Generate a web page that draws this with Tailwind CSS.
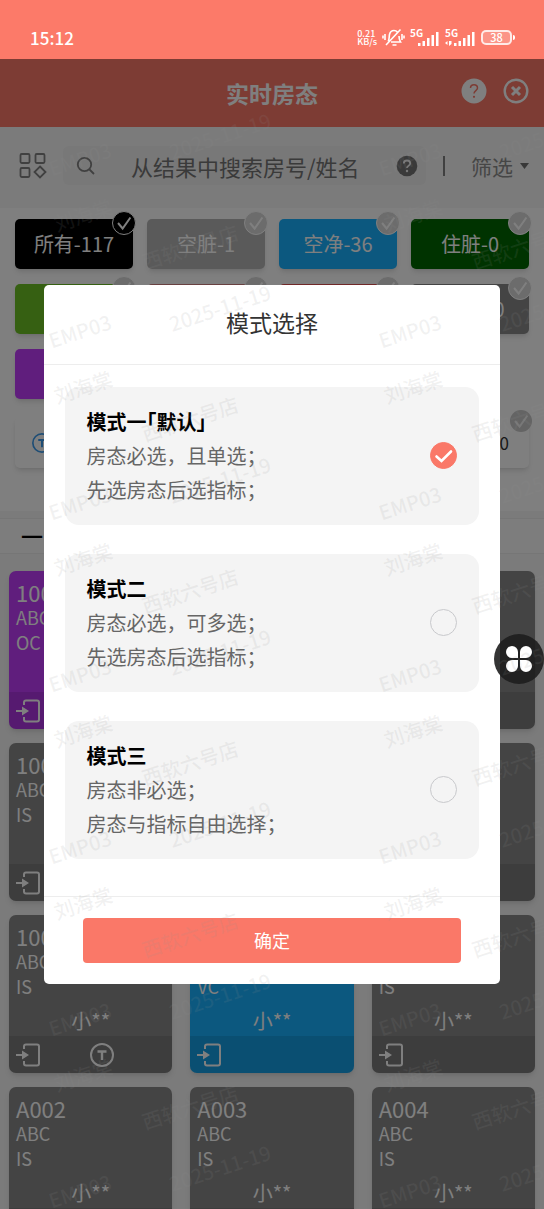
<!DOCTYPE html>
<html lang="zh-CN">
<head>
<meta charset="utf-8">
<meta name="viewport" content="width=device-width, initial-scale=1">
<title>实时房态</title>
<script src="https://cdn.jsdelivr.net/npm/@tailwindcss/browser@4"></script>
</head>
<body class="relative flex h-screen flex-col overflow-hidden bg-[#f6f6f6] font-['Noto_Sans_CJK_SC',sans-serif]">

<svg class="hidden" aria-hidden="true">
  <symbol id="tick" viewBox="0 0 24 24"><path d="M5.500 12l5 6 8.500-12" fill="none" stroke="currentColor" stroke-width="2.200"/></symbol>
  <symbol id="enter" viewBox="0 0 24 24"><path d="M8 6V3.500Q8 1.500 10 1.500H21Q23 1.500 23 3.500V20.500Q23 22.500 21 22.500H10Q8 22.500 8 20.500V18" fill="none" stroke="currentColor" stroke-width="2"/><path d="M0 12h7" stroke="currentColor" stroke-width="2.200"/><path d="M6 7.500L13 12 6 16.500z" fill="currentColor"/></symbol>
  <symbol id="tmark" viewBox="0 0 24 24"><circle cx="12" cy="12" r="11" fill="none" stroke="currentColor" stroke-width="2"/><path d="M7.500 8.500h9M12 8.500v8.500" fill="none" stroke="currentColor" stroke-width="2.400"/></symbol>
</svg>

<!-- Status bar -->
<div class="flex h-[59px] shrink-0 items-end justify-between bg-[#fc7a69] pr-[29px] pl-[30px] text-white">
  <span class="mb-[8px] text-[17px] leading-[26px] font-medium">15:12</span>
  <div class="mb-[12px] flex items-center gap-[5px]">
    <span class="text-[9px] leading-[8px] font-medium">0.21<br>KB/s</span>
    <svg class="h-[19px] w-[23px]" viewBox="0 0 23 19" fill="none" stroke="currentColor" stroke-width="1.600"><path d="M6 13.500C7.500 12 7 9 7.500 6.500 8.200 3.500 10 2.500 12 2.500c1.500 0 2.500.5 3.300 1.500M17 8c0 2 .3 4 1.500 6H9M10.500 17h4M4 17L18.500 1.500M3 6v6M1 7.500v3M20 6v6M22 7.500v3"/></svg>
    <svg class="h-[18px] w-[30px] overflow-visible" viewBox="0 0 30 18" fill="currentColor"><text x="0" y="8" font-size="10" font-weight="700">5G</text><path d="M8 14h2.500v3H8zM12.500 12H15v5h-2.500zM17 9h2.500v8H17zM21.500 6H24v11h-2.500zM26 3h2.500v14H26z"/></svg>
    <svg class="h-[18px] w-[31px] overflow-visible" viewBox="0 0 31 18" fill="currentColor"><text x="0" y="8" font-size="10" font-weight="700">5G</text><path d="M0 14l2.500-2v4zM4 12h2.500v3L4 17zM9 14h2.500v3H9zM13.500 12H16v5h-2.500zM18 9h2.500v8H18zM22.500 6H25v11h-2.500zM27 3h2.500v14H27z"/></svg>
    <div class="flex items-center gap-px">
      <span class="flex h-[15px] w-[31px] items-center justify-center rounded-[5px] border-2 border-white/80 bg-white/20 text-[11px] leading-none font-medium">38</span>
      <span class="h-[5px] w-[2px] rounded-r bg-white"></span>
    </div>
  </div>
</div>

<!-- Page -->
<header class="grid h-[68px] shrink-0 grid-cols-[1fr_auto_1fr] items-center bg-[#fa7868] px-[15px] text-white">
  <span></span>
  <h1 class="text-[23px] font-bold">实时房态</h1>
  <div class="mb-[5px] flex items-center justify-end gap-[16px]">
    <button aria-label="帮助"><svg class="size-[26px]" viewBox="0 0 26 26"><circle cx="13" cy="13" r="12.500" fill="#fff"/><path d="M9.500 10c0-4.500 7-4.500 7 0 0 2.500-3.500 2.700-3.500 5.500" fill="none" stroke="#fa7868" stroke-width="1.500"/><circle cx="13" cy="18.800" r="1.100" fill="#fa7868"/></svg></button>
    <button aria-label="关闭"><svg class="size-[26px]" viewBox="0 0 26 26" fill="none" stroke="#fff"><circle cx="13" cy="13" r="11.300" stroke-width="2.400"/><path d="M9 9l8 8M17 9l-8 8" stroke-width="3"/></svg></button>
  </div>
</header>

<div class="flex h-[81px] shrink-0 items-center pr-[15px] pb-[4px] pl-[19px] text-[#808080]">
  <button aria-label="视图" class="shrink-0"><svg class="size-[28px]" viewBox="0 0 28 28" fill="none" stroke="currentColor" stroke-width="1.800"><rect x="1.500" y="2" width="9" height="9" rx="1.200"/><rect x="16.500" y="2" width="9" height="9" rx="1.200"/><rect x="1.500" y="16" width="9" height="9" rx="1.200"/><path d="M21 14.500l5.500 5.500-5.500 5.500-5.500-5.500z"/></svg></button>
  <label class="ml-[16px] flex h-[39px] min-w-0 flex-1 items-center rounded-md bg-[#f0f0f0] pr-[8px] pl-[13px]">
    <svg class="size-[20px] shrink-0" viewBox="0 0 20 20" fill="none" stroke="currentColor" stroke-width="1.800"><circle cx="8.500" cy="8.500" r="6.700"/><path d="M13.500 13.500l4.500 4.500"/></svg>
    <input type="text" aria-label="搜索" placeholder="从结果中搜索房号/姓名" class="ml-[35px] min-w-0 flex-1 text-[22px] leading-[32px] placeholder:text-[#757575]">
    <svg class="size-[22px] shrink-0" viewBox="0 0 22 22"><circle cx="11" cy="11" r="10.300" fill="#757575"/><path d="M7.800 8.500c0-4 6.400-4 6.400 0 0 2.300-3.200 2.300-3.200 4.500" fill="none" stroke="#f0f0f0" stroke-width="1.800"/><circle cx="11" cy="16" r="1.200" fill="#f0f0f0"/></svg>
  </label>
  <span class="ml-[17px] h-[20px] w-[2px] bg-[#808080]"></span>
  <button class="ml-[26px] flex items-center gap-[7px] text-[21px] leading-[32px] text-[#8c8c8c]">筛选<svg class="h-[6px] w-[9px]" viewBox="0 0 9 6"><path d="M0 0h9L4.500 6z" fill="#707070"/></svg></button>
</div>

<section class="flex h-[303px] shrink-0 flex-col bg-white px-[15px] pt-[11px]">
  <div class="grid grid-cols-4 gap-x-[14px] gap-y-[15px] text-[20px] text-white">
    <button class="relative h-[50px] rounded-[5px] bg-black shadow-md">所有-117<svg class="absolute -top-[8px] -right-[3px] size-[24px] rounded-full border border-white bg-black text-white"><use href="#tick"/></svg></button>
    <button class="relative h-[50px] rounded-[5px] bg-[#b4b4b4] shadow-md">空脏-1<svg class="absolute -top-[8px] -right-[3px] size-[24px] rounded-full border border-white bg-[#d8d8d8] text-white"><use href="#tick"/></svg></button>
    <button class="relative h-[50px] rounded-[5px] bg-[#18b0ff] shadow-md">空净-36<svg class="absolute -top-[8px] -right-[3px] size-[24px] rounded-full border border-white bg-[#d8d8d8] text-white"><use href="#tick"/></svg></button>
    <button class="relative h-[50px] rounded-[5px] bg-[#006600] shadow-md">住脏-0<svg class="absolute -top-[8px] -right-[3px] size-[24px] rounded-full border border-white bg-[#d8d8d8] text-white"><use href="#tick"/></svg></button>
    <button class="relative h-[50px] rounded-[5px] bg-[#6cc024] shadow-md">住净-0<svg class="absolute -top-[8px] -right-[3px] size-[24px] rounded-full border border-white bg-[#d8d8d8] text-white"><use href="#tick"/></svg></button>
    <button class="relative h-[50px] rounded-[5px] bg-[#d08080] shadow-md" aria-label="房态"><svg class="absolute -top-[8px] -right-[3px] size-[24px] rounded-full border border-white bg-[#d8d8d8] text-white"><use href="#tick"/></svg></button>
    <button class="relative h-[50px] rounded-[5px] bg-[#e05050] shadow-md" aria-label="房态"><svg class="absolute -top-[8px] -right-[3px] size-[24px] rounded-full border border-white bg-[#d8d8d8] text-white"><use href="#tick"/></svg></button>
    <button class="relative h-[50px] rounded-[5px] bg-[#888888] shadow-md">维修-10<svg class="absolute -top-[8px] -right-[3px] size-[24px] rounded-full border border-white bg-[#d8d8d8] text-white"><use href="#tick"/></svg></button>
    <button class="h-[50px] rounded-[5px] bg-[#c03cfa] shadow-md">锁房-0</button>
  </div>
  <div class="mt-[18px] grid grid-cols-4 gap-x-[14px] text-[17px] text-[#333]">
    <button class="flex h-[51px] items-center rounded-[5px] bg-white pl-[17px] shadow-md" aria-label="指标"><svg class="size-[20px] text-[#3d9bea]"><use href="#tmark"/></svg></button>
    <span></span>
    <span></span>
    <button class="relative h-[51px] rounded-[5px] bg-white pr-[20px] text-right shadow-md">0<svg class="absolute -top-[7px] -right-[3px] size-[22px] rounded-full bg-[#c8c8c8] text-[#f0f0f0]"><use href="#tick"/></svg></button>
  </div>
</section>

<div class="mt-[7px] flex h-[36px] shrink-0 items-center border-y border-[#ececec] bg-[#fafafa] pb-[2px] pl-[21px] text-[22px] font-medium text-black">一</div>

<main class="grid shrink-0 grid-cols-3 gap-x-[18px] gap-y-[14px] px-[9px] pt-[17px]" id="rooms"></main>

<template id="room">
  <article class="flex h-[158px] flex-col overflow-hidden rounded-[7px] text-white shadow-md">
    <h2 class="h-[34px] pt-[6px] pl-[7px] text-[22px] leading-[30px]"></h2>
    <p class="pl-[7px] text-[18px] leading-[25px]">ABC</p>
    <p class="pl-[7px] text-[18px] leading-[25px]"></p>
    <p class="flex flex-1 items-center justify-center pt-[6px] text-[20px] leading-[30px]"></p>
    <footer class="flex h-[37px] shrink-0 items-center gap-[50px] bg-black/10 pl-[7px]"></footer>
  </article>
</template>
<template id="enter-icon"><svg class="size-[24px]"><use href="#enter"/></svg></template>
<template id="t-icon"><svg class="size-[24px]"><use href="#tmark"/></svg></template>

<!-- Mode dialog -->
<div class="absolute inset-x-0 top-[59px] bottom-0 flex items-center justify-center bg-black/50">
  <form role="dialog" aria-label="模式选择" class="w-[84%] overflow-hidden rounded-[5px] bg-white">
    <h2 class="flex h-[80px] items-center justify-center border-b border-[#ededed] pb-[3px] text-[23px] text-[#333]">模式选择</h2>
    <div class="flex flex-col gap-[29px] px-[21px] pt-[22px] pb-[37px] text-[20px] leading-[34px] text-[#666]">
      <label class="flex items-center justify-between rounded-[14px] bg-[#f4f4f4] px-[22px] py-[18px]">
        <span><b class="block font-bold text-black [font-feature-settings:'halt']">模式一「默认」</b>房态必选，且单选；<br>先选房态后选指标；</span>
        <span class="grid"><input type="radio" name="mode" checked class="peer col-start-1 row-start-1 size-[27px] appearance-none rounded-full border border-[#c8c9cc] checked:border-[#fa7868] checked:bg-[#fa7868]"><svg class="pointer-events-none invisible col-start-1 row-start-1 size-[27px] peer-checked:visible" viewBox="0 0 27 27"><path d="M6.500 14.500l5 4.500 9.500-9.500" fill="none" stroke="#fff" stroke-width="2.600" stroke-linecap="round"/></svg></span>
      </label>
      <label class="flex items-center justify-between rounded-[14px] bg-[#f4f4f4] px-[22px] py-[18px]">
        <span><b class="block font-bold text-black">模式二</b>房态必选，可多选；<br>先选房态后选指标；</span>
        <span class="grid"><input type="radio" name="mode" class="peer col-start-1 row-start-1 size-[27px] appearance-none rounded-full border border-[#c8c9cc] checked:border-[#fa7868] checked:bg-[#fa7868]"><svg class="pointer-events-none invisible col-start-1 row-start-1 size-[27px] peer-checked:visible" viewBox="0 0 27 27"><path d="M6.500 14.500l5 4.500 9.500-9.500" fill="none" stroke="#fff" stroke-width="2.600" stroke-linecap="round"/></svg></span>
      </label>
      <label class="flex items-center justify-between rounded-[14px] bg-[#f4f4f4] px-[22px] py-[18px]">
        <span><b class="block font-bold text-black">模式三</b>房态非必选；<br>房态与指标自由选择；</span>
        <span class="grid"><input type="radio" name="mode" class="peer col-start-1 row-start-1 size-[27px] appearance-none rounded-full border border-[#c8c9cc] checked:border-[#fa7868] checked:bg-[#fa7868]"><svg class="pointer-events-none invisible col-start-1 row-start-1 size-[27px] peer-checked:visible" viewBox="0 0 27 27"><path d="M6.500 14.500l5 4.500 9.500-9.500" fill="none" stroke="#fff" stroke-width="2.600" stroke-linecap="round"/></svg></span>
      </label>
    </div>
    <div class="border-t border-[#ededed] px-[39px] pt-[21px] pb-[21px]">
      <button type="button" class="h-[45px] w-full rounded-[4px] bg-[#fa7868] text-[18px] text-white">确定</button>
    </div>
  </form>
</div>

<!-- Floating shortcut -->
<button aria-label="快捷菜单" class="absolute top-[634px] right-0 flex size-[50px] items-center justify-center rounded-full bg-[#1e1e1e]/90">
  <svg class="size-[26px]" viewBox="0 0 26 26" fill="#fff"><path d="M6 0a6 6 0 0 1 6 6v6H6A6 6 0 0 1 6 0zM20 0a6 6 0 0 1 0 12h-6V6a6 6 0 0 1 6-6zM6 14h6v6a6 6 0 1 1-6-6zM14 14h6a6 6 0 1 1-6 6z"/></svg>
</button>

<!-- Watermark -->
<div id="marks" class="pointer-events-none absolute top-[110px] right-0 bottom-0 left-[40px] grid auto-rows-[172px] grid-cols-[330px_330px] overflow-hidden text-[20px] leading-[24px] font-medium whitespace-nowrap text-[#909090]/12"></div>
<template id="mark">
  <div class="relative">
    <span class="absolute top-[26px] left-[180px] -translate-x-1/2 -translate-y-1/2 -rotate-18">2025-11-19</span>
    <span class="absolute top-[49px] left-[40px] -translate-x-1/2 -translate-y-1/2 -rotate-18">EMP03</span>
    <span class="absolute top-[105px] left-[43px] -translate-x-1/2 -translate-y-1/2 -rotate-18">刘海棠</span>
    <span class="absolute top-[137px] left-[150px] -translate-x-1/2 -translate-y-1/2 -rotate-18">西软六号店</span>
  </div>
</template>

<script>
  const byId = id => document.getElementById(id);
  const icon = id => byId(id).content.cloneNode(true);
  const colors = { purple: '#c03cfa', gray: '#888888', blue: '#18b0ff' };
  const rooms = [
    ['1001', 'OC', 'purple', ''], ['', '', 'gray', ''], ['', '', 'gray', ''],
    ['1004', 'IS', 'gray', ''], ['', '', 'gray', ''], ['', '', 'gray', ''],
    ['1007', 'IS', 'gray', '小**', true], ['1008', 'VC', 'blue', '小**'], ['1009', 'IS', 'gray', '小**'],
    ['A002', 'IS', 'gray', '小**'], ['A003', 'IS', 'gray', '小**'], ['A004', 'IS', 'gray', '小**'],
  ];
  for (const [no, state, color, guest, team] of rooms) {
    const card = byId('room').content.firstElementChild.cloneNode(true);
    const [name, , status, person, foot] = card.children;
    card.style.backgroundColor = colors[color];
    name.textContent = no;
    status.textContent = state;
    person.textContent = guest;
    foot.append(icon('enter-icon'));
    if (team) foot.append(icon('t-icon'));
    byId('rooms').append(card);
  }
  for (let i = 0; i < 14; i++) byId('marks').append(icon('mark'));
</script>
</body>
</html>
